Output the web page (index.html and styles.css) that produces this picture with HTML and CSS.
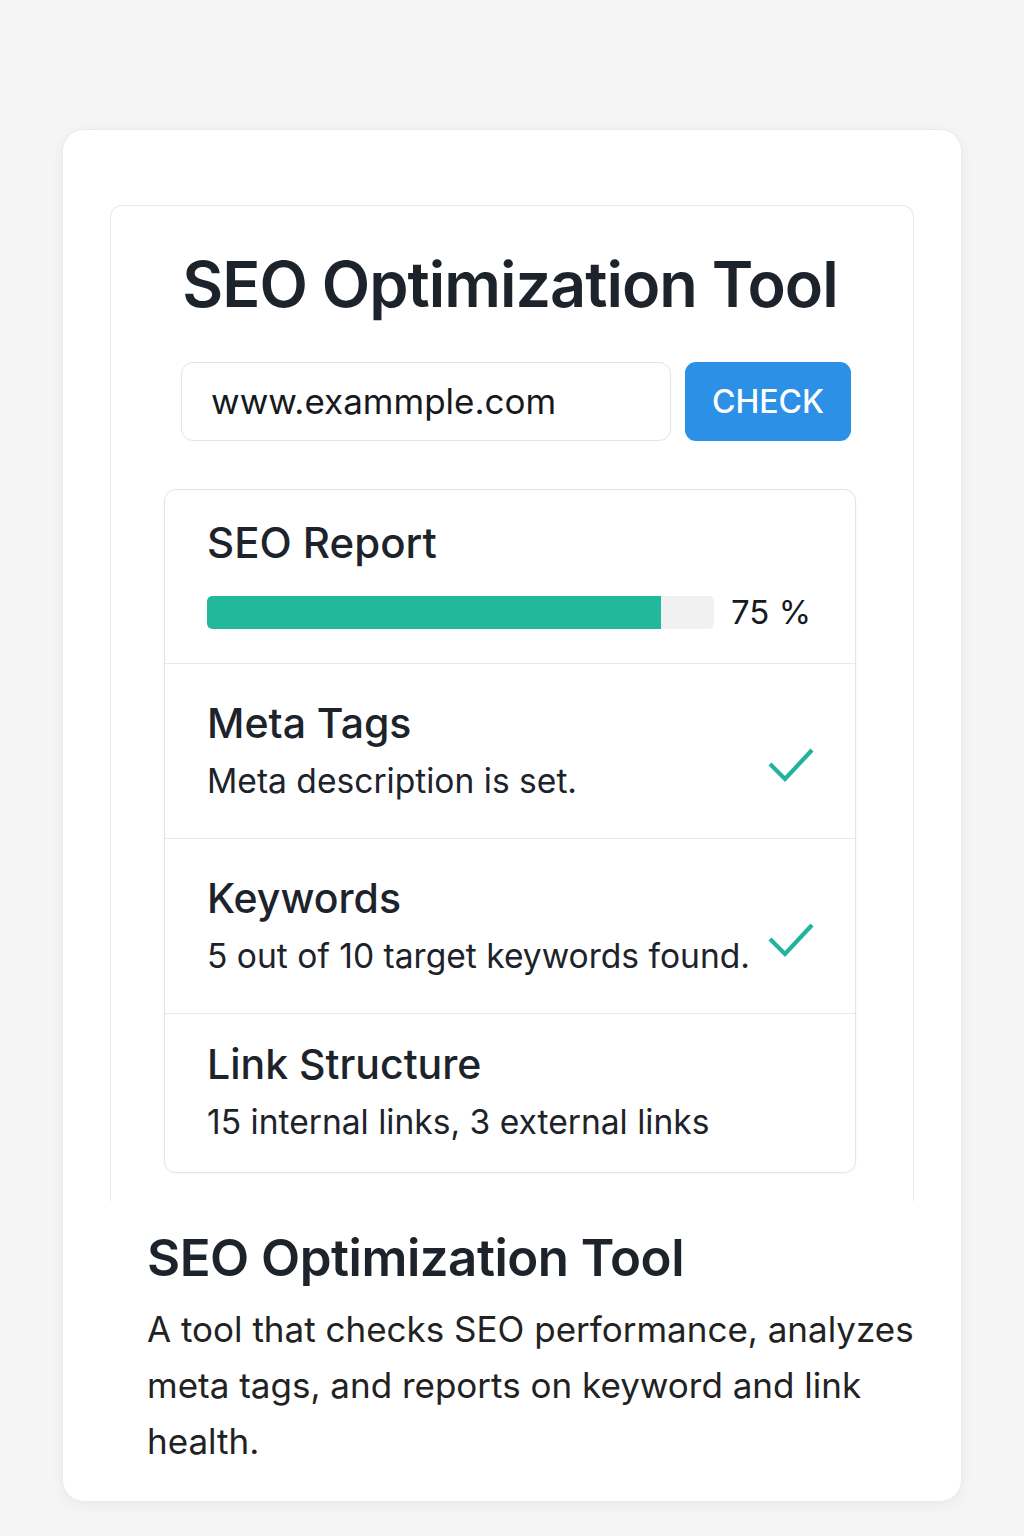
FILE: index.html
```html
<!DOCTYPE html>
<html lang="en">
<head>
<meta charset="utf-8">
<title>SEO Optimization Tool</title>
<link rel="stylesheet" href="styles.css">
</head>
<body>
<main class="card">
  <section class="panel">
    <h1 class="title">SEO Optimization Tool</h1>
    <form class="form-row" onsubmit="return false">
      <div class="url-input">www.exammple.com</div>
      <button class="check-btn" type="button">CHECK</button>
    </form>
    <div class="report">
      <div class="report-item report-head">
        <h2 class="item-title head-title">SEO Report</h2>
        <div class="progress-row">
          <div class="bar"><div class="bar-fill" style="width: 89.5%"></div></div>
          <span class="pct">75 %</span>
        </div>
      </div>
      <div class="report-item with-check">
        <div class="item-text">
          <h2 class="item-title">Meta Tags</h2>
          <p class="item-desc">Meta description is set.</p>
        </div>
        <svg class="check" viewBox="0 0 46 36" width="46" height="36"><polyline points="2,17 17,32 44,3" fill="none" stroke="#22b39b" stroke-width="4.2" stroke-linecap="butt" stroke-linejoin="miter"/></svg>
      </div>
      <div class="report-item with-check">
        <div class="item-text">
          <h2 class="item-title">Keywords</h2>
          <p class="item-desc">5 out of 10 target keywords found.</p>
        </div>
        <svg class="check" viewBox="0 0 46 36" width="46" height="36"><polyline points="2,17 17,32 44,3" fill="none" stroke="#22b39b" stroke-width="4.2" stroke-linecap="butt" stroke-linejoin="miter"/></svg>
      </div>
      <div class="report-item last">
        <div class="item-text">
          <h2 class="item-title">Link Structure</h2>
          <p class="item-desc">15 internal links, 3 external links</p>
        </div>
      </div>
    </div>
  </section>
  <section class="about">
    <h2 class="about-title">SEO Optimization Tool</h2>
    <p class="about-desc">A tool that checks SEO performance, analyzes meta tags, and reports on keyword and link health.</p>
  </section>
</main>
</body>
</html>
```
FILE: styles.css
```css
* { box-sizing: border-box; }
html, body { margin: 0; padding: 0; }
body {
  background: #f5f5f5;
  font-family: Inter, "Noto Sans", "Liberation Sans", sans-serif;
  color: #1d232a;
  width: 1024px;
  height: 1536px;
  padding-top: 129px;
}
.card {
  width: 900px;
  margin-left: 62px;
  background: #fff;
  border: 1px solid #ebebeb;
  border-radius: 22px;
  box-shadow: 0 3px 14px rgba(0,0,0,0.05);
  padding: 75px 47px 34px 47px;
  height: 1373px;
}
.panel {
  border: 1px solid #e9e9e9;
  border-bottom: 0;
  border-radius: 12px 12px 0 0;
  padding: 38px 57px 28px 53px;
}
.title {
  margin: 0;
  text-align: center;
  font-size: 63px;
  line-height: 80px;
  font-weight: 600;
  letter-spacing: -1px;
  white-space: nowrap;
  color: #1d232a;
}
.form-row {
  display: flex;
  gap: 14px;
  margin: 38px 5px 0 17px;
}
.url-input {
  flex: 1;
  height: 79px;
  border: 1px solid #e3e3e3;
  border-radius: 12px;
  padding-left: 29px;
  font-size: 35px;
  line-height: 77px;
  color: #16191d;
}
.check-btn {
  width: 166px;
  height: 79px;
  border: 0;
  border-radius: 11px;
  background: #2b90e6;
  color: #fff;
  font-family: inherit;
  font-size: 32px;
  font-weight: 500;
  padding: 0;
}
.report {
  margin-top: 48px;
  border: 1px solid #e4e4e4;
  border-radius: 12px;
  box-shadow: 0 1px 3px rgba(0,0,0,0.04);
}
.report-item {
  padding: 35px 41px 35px 42px;
  border-top: 1px solid #e8e8e8;
}
.report-item:first-child { border-top: 0; }
.report-head { padding-top: 29px; padding-bottom: 34px; }
.report-item.last { padding-top: 26px; padding-bottom: 28px; }
.with-check {
  display: flex;
  align-items: center;
  justify-content: space-between;
}
.check { margin-top: 27px; flex: none; }
.item-title {
  margin: 0;
  font-size: 41px;
  line-height: 48px;
  font-weight: 500;
  color: #1d232a;
}
.head-title { font-size: 42px; }
.item-desc {
  margin: 12px 0 0 0;
  font-size: 33.6px;
  line-height: 44px;
  color: #1d232a;
}
.progress-row {
  display: flex;
  align-items: center;
  margin-top: 29px;
}
.bar {
  flex: none;
  width: 507px;
  height: 33px;
  background: #f1f1f1;
  border-radius: 5px;
  overflow: hidden;
}
.bar-fill {
  height: 100%;
  background: #22b89c;
  border-radius: 5px 0 0 5px;
}
.pct {
  margin-left: 17px;
  font-size: 33px;
  line-height: 33px;
  white-space: nowrap;
  color: #16191d;
}
.about {
  padding: 25px 0 0 37px;
}
.about-title {
  margin: 0;
  font-size: 51px;
  line-height: 64px;
  font-weight: 600;
  letter-spacing: -0.5px;
  color: #1d232a;
}
.about-desc {
  margin: 11px 0 0 0;
  font-size: 35px;
  line-height: 56px;
  color: #222;
}
```
